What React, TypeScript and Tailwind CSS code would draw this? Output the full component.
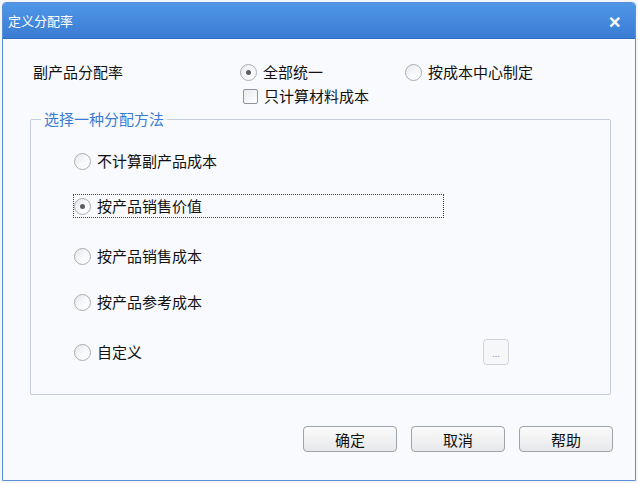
import React from "react";

const font = { fontFamily: '"Noto Sans CJK SC", "Noto Sans", sans-serif' };

function Radio({ checked }: { checked?: boolean }) {
  return (
    <span className="flex h-[17px] w-[17px] shrink-0 items-center justify-center rounded-full border border-[#a9adb3] bg-gradient-to-br from-[#e4e6ea] via-[#f7f8fa] to-[#ffffff]">
      {checked && <span className="h-[5px] w-[5px] rounded-full bg-[#5a5f66]" />}
    </span>
  );
}

function Check() {
  return <span className="h-[15px] w-[15px] shrink-0 rounded-[2px] border border-[#8e949b] bg-gradient-to-br from-[#e9ebee] to-[#ffffff]" />;
}

function Btn({ label }: { label: string }) {
  return (
    <button className="flex h-[26px] w-[94px] items-center justify-center rounded-[4px] border border-[#9ea3a9] bg-gradient-to-b from-[#fbfbfb] to-[#e7e8ea] text-[15px] leading-none text-[#111]">
      {label}
    </button>
  );
}

export default function App() {
  return (
    <div className="h-[483px] w-[638px] overflow-hidden bg-[#f4f6fa]" style={font}>
      <div className="ml-[2px] mt-[2px] flex h-[479px] w-[634px] flex-col overflow-hidden rounded-t-[4px] border border-[#5b8fd6] bg-[#f8fafe]">
        <div className="flex h-[35px] shrink-0 items-center justify-between bg-gradient-to-b from-[#4f97e8] to-[#3a7cd3] pl-[5px] pr-[14px]">
          <span className="text-[13px] text-white">定义分配率</span>
          <span className="text-[16px] font-black leading-none text-white">✕</span>
        </div>
        <div className="flex flex-1 flex-col border-t border-[#2f6cc0] pl-[30px] pt-[23px] text-[15px] leading-[20px] text-[#111]">
          <div className="flex">
            <div className="w-[207px]">副产品分配率</div>
            <div className="flex flex-col">
              <div className="flex items-center">
                <div className="flex w-[165px] items-center gap-[6px]">
                  <Radio checked />
                  <span>全部统一</span>
                </div>
                <div className="flex items-center gap-[6px]">
                  <Radio />
                  <span>按成本中心制定</span>
                </div>
              </div>
              <div className="ml-[3px] mt-[4px] flex items-center gap-[6px]">
                <Check />
                <span>只计算材料成本</span>
              </div>
            </div>
          </div>
          <fieldset className="-ml-[3px] mt-[3px] h-[286px] w-[581px] rounded-[2px] border border-[#c5ceda] p-0">
            <legend className="ml-[10px] px-[3px] text-[#3a7ad4]">选择一种分配方法</legend>
            <div className="ml-[42px] flex flex-col">
              <div className="mt-[20px] flex h-[24px] items-center gap-[6px] pl-[1px]">
                <Radio />
                <span>不计算副产品成本</span>
              </div>
              <div className="mt-[21px] flex h-[24px] w-[371px] items-center gap-[6px] border border-dotted border-[#444] pl-[0px]">
                <Radio checked />
                <span>按产品销售价值</span>
              </div>
              <div className="mt-[26px] flex h-[24px] items-center gap-[6px] pl-[1px]">
                <Radio />
                <span>按产品销售成本</span>
              </div>
              <div className="mt-[22px] flex h-[24px] items-center gap-[6px] pl-[1px]">
                <Radio />
                <span>按产品参考成本</span>
              </div>
              <div className="mt-[26px] flex h-[24px] w-[436px] items-center justify-between pl-[1px]">
                <div className="flex items-center gap-[6px]">
                  <Radio />
                  <span>自定义</span>
                </div>
                <div className="flex h-[26px] w-[26px] items-end justify-center rounded-[4px] border border-[#cfd3d9] bg-[#f6f7f9] pb-[6px] text-[9px] leading-none text-[#9aa0a8]">
                  ...
                </div>
              </div>
            </div>
          </fieldset>
          <div className="mt-[31px] flex justify-end gap-[14px] pr-[22px]">
            <Btn label="确定" />
            <Btn label="取消" />
            <Btn label="帮助" />
          </div>
        </div>
      </div>
    </div>
  );
}
